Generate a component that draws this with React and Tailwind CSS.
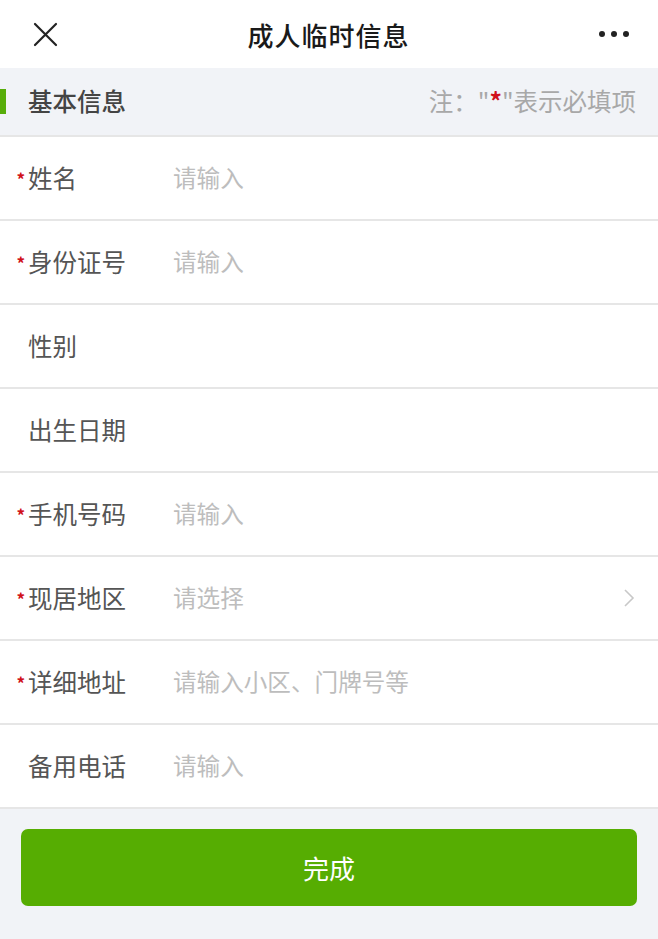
import React from "react";

const rows = [
  { label: "姓名", required: true, placeholder: "请输入" },
  { label: "身份证号", required: true, placeholder: "请输入" },
  { label: "性别", required: false, placeholder: "" },
  { label: "出生日期", required: false, placeholder: "" },
  { label: "手机号码", required: true, placeholder: "请输入" },
  { label: "现居地区", required: true, placeholder: "请选择", arrow: true },
  { label: "详细地址", required: true, placeholder: "请输入小区、门牌号等" },
  { label: "备用电话", required: false, placeholder: "请输入" },
];

const font = { fontFamily: '"Noto Sans CJK SC", "Noto Sans", sans-serif' };

export default function App() {
  return (
    <div className="w-[658px] min-h-[939px] bg-[#f1f3f7] flex flex-col" style={font}>
      <div className="h-[68px] bg-white flex items-center justify-between px-[33px] pr-[29px]">
        <svg width="25" height="25" viewBox="0 0 25 25">
          <path d="M2 2L23 23M23 2L2 23" stroke="#222" strokeWidth="2.2" strokeLinecap="round" />
        </svg>
        <div className="text-[26px] font-medium text-[#1a1a1a] tracking-[1px]">成人临时信息</div>
        <div className="flex gap-[6px] items-center w-[30px]">
          <span className="w-[6px] h-[6px] rounded-full bg-[#222]" />
          <span className="w-[6px] h-[6px] rounded-full bg-[#222]" />
          <span className="w-[6px] h-[6px] rounded-full bg-[#222]" />
        </div>
      </div>

      <div className="h-[69px] flex items-center justify-between border-b-2 border-[#e6e6e6]">
        <div className="flex items-center">
          <span className="w-[6px] h-[25px] bg-[#57ad0a]" />
          <span className="ml-[22px] text-[24.5px] font-medium text-[#444]">基本信息</span>
        </div>
        <div className="pr-[22px] text-[24.5px] text-[#a8a8a8]">
          注："<span className="text-[#d0101b] font-bold">*</span>"表示必填项
        </div>
      </div>

      <div className="bg-white">
        {rows.map((r) => (
          <div key={r.label} className="h-[84px] flex items-center border-b-2 border-[#e6e6e6] relative">
            <div className="w-[173px] flex items-center">
              <span className="w-[28px] text-right pr-[3px] text-[#d0101b] text-[17px] font-bold leading-none">
                {r.required ? "*" : ""}
              </span>
              <span className="text-[24.5px] text-[#555]">{r.label}</span>
            </div>
            <span className="flex-1 text-[23.6px] text-[#bdbdbd]">{r.placeholder}</span>
            {r.arrow && (
              <svg className="mr-[23px]" width="12" height="20" viewBox="0 0 12 20">
                <path d="M2 2L10 10L2 18" stroke="#c8c8c8" strokeWidth="1.6" fill="none" />
              </svg>
            )}
          </div>
        ))}
      </div>

      <div className="px-[21px] pt-[20px]">
        <button className="w-full h-[77px] rounded-[7px] bg-[#56ad02] text-white text-[26px]">完成</button>
      </div>
    </div>
  );
}
